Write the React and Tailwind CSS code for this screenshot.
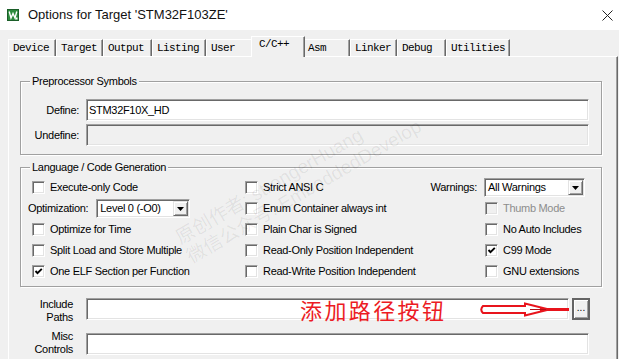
import React from "react";

const SUNKEN =
  "border border-t-[#a0a0a0] border-l-[#a0a0a0] border-r-white border-b-white shadow-[inset_1px_1px_0_#696969,inset_-1px_-1px_0_#e3e3e3]";
const RAISED =
  "border border-t-[#e3e3e3] border-l-[#e3e3e3] border-r-[#696969] border-b-[#696969] shadow-[inset_1px_1px_0_white,inset_-1px_-1px_0_#a0a0a0]";

function Checkbox({ checked, disabled }) {
  return (
    <div
      className={`w-[13px] h-[13px] shrink-0 flex items-center justify-center ${SUNKEN} ${
        disabled ? "bg-[#f0f0f0]" : "bg-white"
      }`}
    >
      {checked && (
        <svg width="9" height="9" viewBox="0 0 9 9">
          <path d="M1.5 4 L3.5 6.2 L7.8 1.8" stroke="black" strokeWidth="1.9" fill="none" />
        </svg>
      )}
    </div>
  );
}

function Check({ label, checked, disabled }) {
  return (
    <div className="flex items-center gap-[5px]">
      <Checkbox checked={checked} disabled={disabled} />
      <span className={disabled ? "text-[#8d8d8d]" : "text-black"}>{label}</span>
    </div>
  );
}

function Select({ value, w }) {
  return (
    <div className={`${SUNKEN} bg-white p-[1px] h-[19px] flex items-center ${w}`}>
      <span className="flex-1 pl-[2px] leading-[13px] whitespace-nowrap">{value}</span>
      <div className={`${RAISED} bg-[#f0f0f0] w-[15px] h-full flex items-center justify-center`}>
        <svg width="7" height="4" viewBox="0 0 7 4">
          <path d="M0 0 L7 0 L3.5 4 Z" fill="black" />
        </svg>
      </div>
    </div>
  );
}

const TABS = [
  ["Device", "w-[48px]"],
  ["Target", "w-[47px]"],
  ["Output", "w-[49px]"],
  ["Listing", "w-[54px]"],
  ["User", "w-[47px]"],
  ["C/C++", "w-[50px]", true],
  ["Asm", "w-[47px]"],
  ["Linker", "w-[47px]"],
  ["Debug", "w-[49px]"],
  ["Utilities", "w-[64px]"],
];

function Tab({ label, w, sel }) {
  if (sel) {
    return (
      <div className="w-[54px] -mx-[2px] -mb-[1px] h-[21px] relative z-10 bg-[#f0f0f0] border-t border-l border-t-white border-l-white border-r border-r-[#696969] shadow-[inset_-1px_0_0_#a0a0a0] pl-[7px] pt-[1px] leading-[13px]">
        {label}
      </div>
    );
  }
  return (
    <div
      className={`${w} h-[17px] bg-[#f0f0f0] border-t border-l border-t-white border-l-white border-r border-r-[#696969] shadow-[inset_-1px_0_0_#a0a0a0] pl-[4px] pt-[2px] leading-[13px]`}
    >
      {label}
    </div>
  );
}

function GroupBox({ title, className, children }) {
  return (
    <div
      className={`border border-[#a0a0a0] shadow-[inset_1px_1px_0_white,1px_1px_0_white] ${className}`}
    >
      <div className="-mt-[8px] ml-[9px] w-fit px-[2px] bg-[#f0f0f0] leading-[14px] h-[14px] relative">
        {title}
      </div>
      {children}
    </div>
  );
}

export default function App() {
  return (
    <div className="w-[619px] h-[359px] overflow-hidden bg-[#f0f0f0] relative font-['Liberation_Sans',Arial,sans-serif] text-[11px] tracking-[-0.3px] text-black">
      {/* Title bar */}
      <div className="h-[30px] bg-white flex items-center">
        <svg className="ml-[7px] shrink-0" width="12" height="12" viewBox="0 0 12 12">
          <rect x="0" y="0" width="12" height="12" fill="#2c8a3c" />
          <rect x="0.5" y="0.5" width="11" height="11" fill="none" stroke="#1b5e29" />
          <path d="M2.2 2.5 L4 9 L6 4.5 L8 9 L9.8 2.5" stroke="white" strokeWidth="1.4" fill="none" />
          <rect x="8.5" y="8.5" width="2" height="2" fill="white" />
        </svg>
        <span className="ml-[9px] text-[13px] tracking-normal text-[#111]">
          Options for Target 'STM32F103ZE'
        </span>
        <svg className="ml-auto mr-[6px]" width="11" height="11" viewBox="0 0 11 11">
          <path d="M0.5 0.5 L10.5 10.5 M10.5 0.5 L0.5 10.5" stroke="#222" strokeWidth="1" />
        </svg>
      </div>

      {/* Tabs */}
      <div className="h-[26px] flex items-end pl-[8px] font-['Liberation_Mono',monospace] text-[11px] tracking-[-0.6px]">
        {TABS.map(([l, w, s]) => (
          <Tab key={l} label={l} w={w} sel={s} />
        ))}
      </div>

      {/* Tab page */}
      <div className="ml-[8px] w-[610px] h-[320px] border-t border-l border-t-white border-l-white border-r border-r-[#696969] shadow-[inset_-1px_0_0_#a0a0a0]">
        <GroupBox title="Preprocessor Symbols" className="mt-[24px] ml-[11px] w-[582px] h-[74px]">
          <div className="mt-[11px] flex items-center">
            <span className="w-[58px] text-right">Define:</span>
            <div className={`ml-[7px] w-[503px] h-[22px] bg-white ${SUNKEN} flex items-center pl-[2px]`}>
              STM32F10X_HD
            </div>
          </div>
          <div className="mt-[3px] flex items-center">
            <span className="w-[58px] text-right">Undefine:</span>
            <div className={`ml-[7px] w-[503px] h-[22px] bg-[#f0f0f0] ${SUNKEN}`} />
          </div>
        </GroupBox>

        <GroupBox title="Language / Code Generation" className="mt-[12px] ml-[11px] w-[582px] h-[120px]">
          <div className="mt-[3px] flex flex-col">
            <div className="h-[21px] flex items-center">
              <div className="w-[224px] pl-[11px]">
                <Check label="Execute-only Code" />
              </div>
              <div className="w-[239px] flex items-center">
                <Check label="Strict ANSI C" />
                <span className="ml-auto mr-[7px]">Warnings:</span>
              </div>
              <Select value="All Warnings" w="w-[101px]" />
            </div>
            <div className="h-[21px] flex items-center">
              <div className="w-[224px] pl-[7px] flex items-center">
                <span>Optimization:</span>
                <div className="ml-[8px]">
                  <Select value="Level 0 (-O0)" w="w-[94px]" />
                </div>
              </div>
              <div className="w-[239px]">
                <Check label="Enum Container always int" />
              </div>
              <div className="ml-[1px]">
                <Check label="Thumb Mode" disabled />
              </div>
            </div>
            <div className="h-[21px] flex items-center">
              <div className="w-[224px] pl-[11px]">
                <Check label="Optimize for Time" />
              </div>
              <div className="w-[239px]">
                <Check label="Plain Char is Signed" />
              </div>
              <div className="ml-[1px]">
                <Check label="No Auto Includes" />
              </div>
            </div>
            <div className="h-[21px] flex items-center">
              <div className="w-[224px] pl-[11px]">
                <Check label="Split Load and Store Multiple" />
              </div>
              <div className="w-[239px]">
                <Check label="Read-Only Position Independent" />
              </div>
              <div className="ml-[1px]">
                <Check label="C99 Mode" checked />
              </div>
            </div>
            <div className="h-[21px] flex items-center">
              <div className="w-[224px] pl-[11px]">
                <Check label="One ELF Section per Function" checked />
              </div>
              <div className="w-[239px]">
                <Check label="Read-Write Position Independent" />
              </div>
              <div className="ml-[1px]">
                <Check label="GNU extensions" />
              </div>
            </div>
          </div>
        </GroupBox>

        <div className="mt-[11px] flex items-start">
          <div className="w-[64px] text-right leading-[13px]">
            Include
            <br />
            Paths
          </div>
          <div className={`ml-[13px] w-[483px] h-[22px] bg-white ${SUNKEN}`} />
          <div className="ml-[3px] w-[18px] h-[22px] bg-[#f0f0f0] border border-[#646464] shadow-[inset_1px_1px_0_#646464,inset_-1px_-1px_0_#646464,inset_2px_2px_0_white,inset_-2px_-2px_0_#a0a0a0] flex items-center justify-center text-[10px] tracking-normal leading-none pb-[2px]">
            ...
          </div>
        </div>
        <div className="mt-[9px] flex items-start">
          <div className="w-[64px] text-right leading-[13px] -mt-[3px]">
            Misc
            <br />
            Controls
          </div>
          <div className={`ml-[13px] w-[503px] h-[22px] bg-white ${SUNKEN}`} />
        </div>
      </div>

      {/* Annotation overlay */}
      <div className="absolute left-[300px] top-[296px] text-[22px] leading-[26px] tracking-[2.4px] text-[#ec1c24] font-['Noto_Sans_CJK_SC',sans-serif] whitespace-nowrap">
        添加路径按钮
      </div>
      <svg className="absolute left-[478px] top-[300px]" width="94" height="18" viewBox="478 300 94 18">
        <path
          d="M483 306 L525 306 L525 303.5 L549 309.5 L525 315.5 L525 313 L483 313 Q479.5 309.5 483 306 Z"
          stroke="#e8141c"
          strokeWidth="2"
          fill="none"
        />
        <path d="M540 309.5 L569 309.5" stroke="#e8141c" strokeWidth="3" />
        <path d="M530 309.5 L546 309.5" stroke="#b01018" strokeWidth="1" />
      </svg>

      {/* Watermark */}
      <div className="absolute left-[172px] top-[230px] origin-top-left -rotate-[30deg] text-[19px] leading-[22px] tracking-normal text-black/[0.07] whitespace-nowrap font-['Liberation_Sans','Noto_Sans_CJK_SC',sans-serif] pointer-events-none">
        <div>原创作者: strongerHuang</div>
        <div>微信公众号: EmbeddedDevelop</div>
      </div>
    </div>
  );
}
